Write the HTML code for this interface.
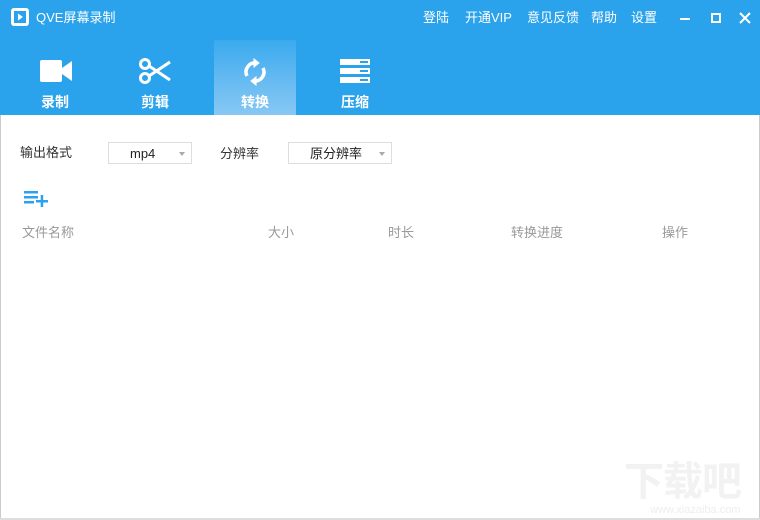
<!DOCTYPE html>
<html><head><meta charset="utf-8"><style>
*{margin:0;padding:0;box-sizing:border-box}
body{width:760px;height:520px;overflow:hidden;background:#fff;font-family:"Liberation Sans","Noto Sans CJK SC",sans-serif;position:relative}
.hdr{position:absolute;left:0;top:0;width:760px;height:115px;background:#2ba3ec}
.abs{position:absolute;line-height:1}
.w{color:#fff}
.tab{position:absolute;top:40px;width:82px;height:75px;text-align:center;color:#fff;font-size:14px;font-weight:bold}
.tab span{position:absolute;left:0;right:0;top:52px}
.act{background:linear-gradient(180deg,#3aaaee 0%,#6bbcf2 60%,#86c8f4 100%)}
.gray{color:#999;font-size:13px}
.sel{position:absolute;top:142px;height:22px;border:1px solid #ddd;font-size:13px;color:#222;line-height:22px}
.sel:after{content:"";position:absolute;right:6px;top:9px;border:3px solid transparent;border-top:4px solid #aaa}
</style></head><body>
<div class="hdr"></div>
<div class="abs" style="left:11px;top:8px;width:18px;height:18px;background:#fff;border-radius:3px"></div>
<svg class="abs" style="left:11px;top:8px" width="18" height="18"><rect x="3" y="3" width="12" height="12" fill="#2ba3ec"/><path d="M7 5.5 L12 9 L7 12.5Z" fill="#fff"/></svg>
<div class="abs w" style="left:36px;top:11px;font-size:13px">QVE屏幕录制</div>
<div class="abs w" style="left:423px;top:11px;font-size:13px">登陆</div>
<div class="abs w" style="left:465px;top:11px;font-size:13px">开通VIP</div>
<div class="abs w" style="left:527px;top:11px;font-size:13px">意见反馈</div>
<div class="abs w" style="left:591px;top:11px;font-size:13px">帮助</div>
<div class="abs w" style="left:631px;top:11px;font-size:13px">设置</div>
<div class="abs" style="left:680px;top:18px;width:10px;height:2px;background:#fff"></div>
<div class="abs" style="left:711px;top:13px;width:10px;height:10px;border:2px solid #fff"></div>
<svg class="abs" style="left:739px;top:12px" width="12" height="12"><path d="M1 1L11 11M11 1L1 11" stroke="#fff" stroke-width="2"/></svg>
<div class="tab" style="left:14px"><svg style="position:absolute;left:26px;top:20px" width="32" height="22"><rect x="0" y="0" width="22" height="22" rx="2" fill="#fff"/><path d="M22 8 L32 1 V21 L22 14Z" fill="#fff"/></svg><span>录制</span></div>
<div class="tab" style="left:114px"><svg style="position:absolute;left:24px;top:18px" width="34" height="26" fill="none" stroke="#fff" stroke-width="3"><circle cx="7" cy="6" r="4.5"/><circle cx="7" cy="20" r="4.5"/><path d="M11 8 L32 22 M11 18 L32 4"/></svg><span>剪辑</span></div>
<div class="tab act" style="left:214px"><svg style="position:absolute;left:28px;top:18px" width="26" height="28" fill="none" stroke="#fff" stroke-width="3.5"><path d="M5 18 A9 9 0 0 1 14 5"/><path d="M21 10 A9 9 0 0 1 12 23"/><path d="M12 1 L17 5 L12 9Z" fill="#fff" stroke-width="1"/><path d="M14 19 L9 23 L14 27Z" fill="#fff" stroke-width="1"/></svg><span>转换</span></div>
<div class="tab" style="left:314px"><svg style="position:absolute;left:26px;top:19px" width="30" height="24"><rect x="0" y="0" width="30" height="6" fill="#fff"/><rect x="0" y="9" width="30" height="6" fill="#fff"/><rect x="0" y="18" width="30" height="6" fill="#fff"/><rect x="20" y="2" width="8" height="2" fill="#2ba3ec"/><rect x="20" y="11" width="8" height="2" fill="#2ba3ec"/><rect x="20" y="20" width="8" height="2" fill="#2ba3ec"/></svg><span>压缩</span></div>
<div class="abs" style="left:0;top:115px;width:1px;height:405px;background:#ccc"></div>
<div class="abs" style="right:0;top:115px;width:1px;height:405px;background:#ccc"></div>
<div class="abs" style="left:0;bottom:0;width:760px;height:2px;background:#ddd"></div>
<div class="abs" style="left:20px;top:146px;font-size:13px;color:#333">输出格式</div>
<div class="sel" style="left:108px;width:84px;padding-left:21px">mp4</div>
<div class="abs" style="left:220px;top:147px;font-size:13px;color:#333">分辨率</div>
<div class="sel" style="left:288px;width:104px;padding-left:21px">原分辨率</div>
<svg class="abs" style="left:24px;top:189px" width="26" height="18" fill="#2ba3ec"><rect x="0" y="2" width="14" height="2.5"/><rect x="0" y="7" width="14" height="2.5"/><rect x="0" y="12" width="10" height="2.5"/><rect x="12" y="11" width="12" height="2.5"/><rect x="16.7" y="6" width="2.5" height="12"/></svg>
<div class="abs gray" style="left:22px;top:226px">文件名称</div>
<div class="abs gray" style="left:268px;top:226px">大小</div>
<div class="abs gray" style="left:388px;top:226px">时长</div>
<div class="abs gray" style="left:511px;top:226px">转换进度</div>
<div class="abs gray" style="left:662px;top:226px">操作</div>
<div class="abs" style="left:624px;top:462px;font-size:40px;color:#f2f2f2;font-weight:bold;letter-spacing:-1px">下载吧</div>
<div class="abs" style="left:650px;top:505px;font-size:11px;color:#eee">www.xiazaiba.com</div>
</body></html>
